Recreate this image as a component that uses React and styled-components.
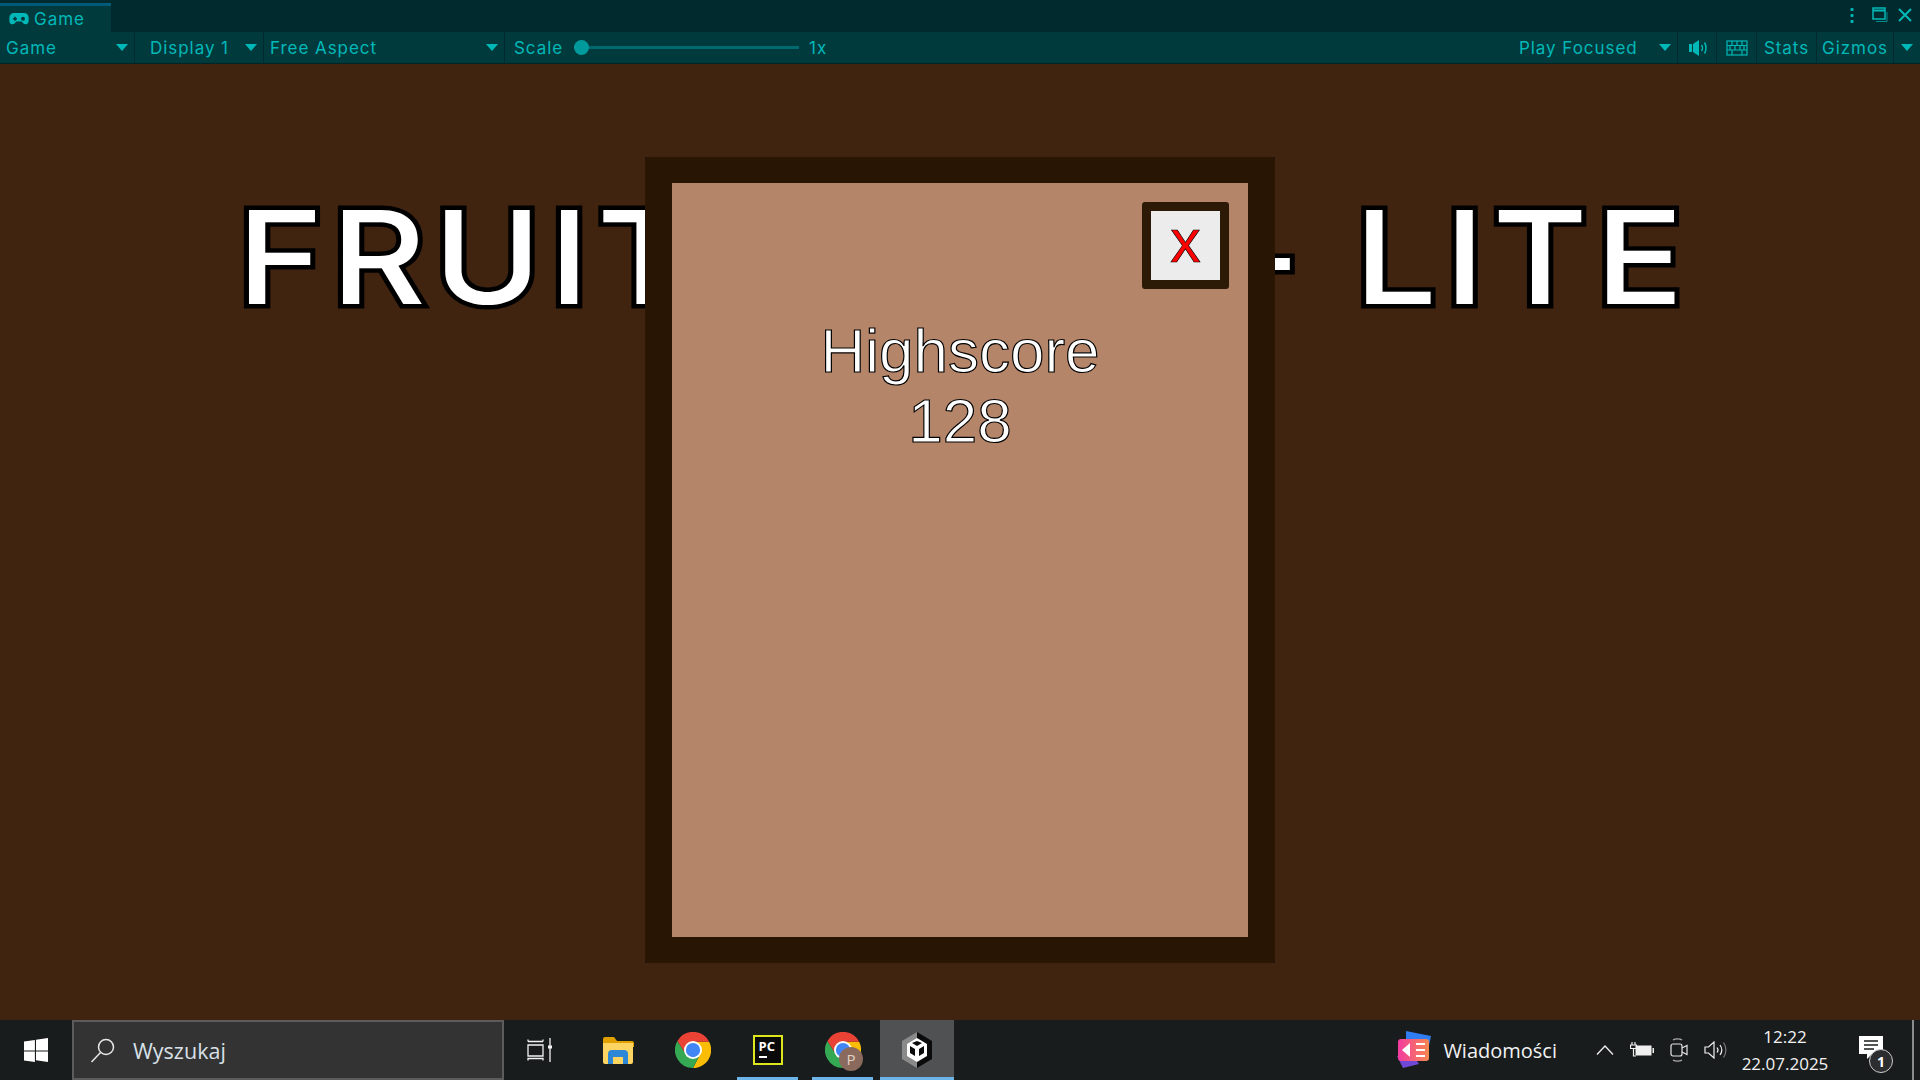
import React from "react";
import styled, { createGlobalStyle } from "styled-components";

const Global = createGlobalStyle`
  html, body { margin: 0; padding: 0; background: #402410; }
  * { box-sizing: border-box; }
`;

const Arrow = () => <ArrowShape />;

const GamepadIcon = () => (
  <svg width="20" height="14" viewBox="0 0 20 14">
    <path d="M5 1h10a4.6 4.6 0 0 1 4.6 4.6v3.6c0 3-3.6 4.2-5.4 2l-1.4-1.6H7.2l-1.4 1.6c-1.8 2.2-5.4 1-5.4-2V5.600A4.6 4.6 0 0 1 5 1z" fill="#00b8b8" />
    <path d="M4 6h4v1.600H4zM5.200 4.800h1.600v4H5.200z" fill="#00363a" />
    <circle cx="14" cy="6.800" r="2" fill="#00363a" />
  </svg>
);

const SpeakerIcon = () => (
  <svg width="20" height="16" viewBox="0 0 20 16" fill="#00b8b8">
    <rect x="0" y="4" width="3" height="8" />
    <path d="M4 4l6-4v16l-6-4z" />
    <path d="M12.500 5c1.300 1.600 1.300 4.400 0 6" fill="none" stroke="#00b8b8" strokeWidth="1.500" />
    <path d="M15.500 2.500c2 3 2 8 0 11" fill="none" stroke="#00b8b8" strokeWidth="1.500" />
  </svg>
);

const KeyboardIcon = () => (
  <svg width="22" height="16" viewBox="0 0 22 16" fill="none" stroke="#00b8b8" strokeWidth="1.200">
    <rect x="1" y="1" width="20" height="14" />
    <path d="M1 5.500h20M1 10h20M6 1v4.500M11 1v4.500M16 1v4.500M4 5.500V10M9 5.500V10M14 5.500V10M18 5.500V10M6 10v5M16 10v5" />
  </svg>
);

const MenuDots = () => (
  <svg width="4" height="15" viewBox="0 0 4 15" fill="#00b8b8">
    <rect x="0.500" y="0" width="3" height="3" rx="1" />
    <rect x="0.500" y="6" width="3" height="3" rx="1" />
    <rect x="0.500" y="12" width="3" height="3" rx="1" />
  </svg>
);

const MaximizeIcon = () => (
  <svg width="16" height="16" viewBox="0 0 16 16" fill="none" stroke="#00b8b8">
    <rect x="1" y="1" width="12" height="11" strokeWidth="1.500" />
    <path d="M1 3.500h12" strokeWidth="2" />
    <path d="M4 14.500h11V5" strokeWidth="1" opacity="0.700" />
  </svg>
);

const CloseIcon = () => (
  <svg width="14" height="14" viewBox="0 0 14 14" stroke="#00b8b8" strokeWidth="2">
    <path d="M1 1l12 12M13 1L1 13" />
  </svg>
);

const WindowsLogo = () => (
  <svg width="24" height="24" viewBox="0 0 24 24" fill="#fff">
    <path d="M0 3.400l10.900-1.500v10.500H0zM12 1.700L24 0v12.400H12zM0 13.500h10.900v10.500L0 22.500zM12 13.500h12V24l-12-1.700z" />
  </svg>
);

const SearchIcon = () => (
  <svg width="26" height="26" viewBox="0 0 26 26" fill="none" stroke="#e8e8e8" strokeWidth="1.500">
    <circle cx="16" cy="10" r="7.500" />
    <path d="M10.500 15.500L1.500 25" />
  </svg>
);

const TaskViewIcon = () => (
  <svg width="26" height="24" viewBox="0 0 26 24" fill="none" stroke="#f2f2f2" strokeWidth="1.300">
    <path d="M1 3.500V1.500M1 3.500h15M16 3.500V1.500M1 7h15v11H1zM1 22.500v-2h15v2" />
    <path d="M23 0v24" />
    <rect x="21" y="7.500" width="4" height="3" fill="#f2f2f2" stroke="none" />
  </svg>
);

const FolderIcon = () => (
  <svg width="32" height="27" viewBox="0 0 32 27">
    <path d="M1 2a2 2 0 0 1 2-2h9l3 4h15a2 2 0 0 1 2 2v4H1z" fill="#e0a100" />
    <path d="M1 6h30v19a2 2 0 0 1-2 2H3a2 2 0 0 1-2-2z" fill="#fbd461" />
    <path d="M6 27V17a4 4 0 0 1 4-4h12a4 4 0 0 1 4 4v10h-5v-7H11v7z" fill="#2c87d6" />
  </svg>
);

const ChromeIcon = () => (
  <svg width="36" height="36" viewBox="0 0 48 48">
    <path d="M24 13H45.500A24 24 0 0 1 24 48L33.500 29.500Z" fill="#fbbc04" />
    <path d="M14.500 29.500L3.200 12A24 24 0 0 0 24 48L33.500 29.500Z" fill="#34a853" />
    <path d="M24 13H45.500A24 24 0 0 0 3.200 12L14.500 29.500Z" fill="#ea4335" />
    <circle cx="24" cy="24" r="12" fill="#fff" />
    <circle cx="24" cy="24" r="9.500" fill="#4285f4" />
  </svg>
);

const UnityIcon = () => (
  <svg width="32" height="36" viewBox="0 0 32 36">
    <path d="M16 0L31 9v18L16 36z" fill="#0b0b0b" />
    <path d="M16 0L1 9v18l15 9z" fill="#8a8a8a" />
    <path d="M16 6l10 6v12l-10 6-10-6V12z" fill="#fff" />
    <path d="M16 14l-5-3 5-2 5 2zM9 14l5 3v7l-5-3zM23 14l-5 3v7l5-3z" fill="#0b0b0b" />
  </svg>
);

const NewsIcon = () => (
  <svg width="36" height="38" viewBox="0 0 36 38">
    <path d="M11 0l25 5-5 24-20-5z" fill="#2f7df0" />
    <path d="M2 25l6 12 16-4-8-12z" fill="#7048d8" />
    <rect x="3" y="8" width="31" height="22" rx="3" fill="url(#newsFill)" />
    <defs>
      <linearGradient id="newsFill" x1="0" x2="1">
        <stop offset="0" stopColor="#f23ba0" />
        <stop offset="1" stopColor="#f8884e" />
      </linearGradient>
    </defs>
    <path d="M7 19l8-7v14z" fill="#fff" />
    <path d="M21 13h9M21 19h9M21 25h9" stroke="#fff" strokeWidth="2" />
  </svg>
);

const ChevronIcon = () => (
  <svg width="18" height="10" viewBox="0 0 18 10" fill="none" stroke="#f0f0f0" strokeWidth="1.300">
    <path d="M1 9.500L9 1l8 8.500" />
  </svg>
);

const BatteryIcon = () => (
  <svg width="24" height="16" viewBox="0 0 24 16">
    <path d="M5 0v3M2 0v3M0.500 3h6v3.500h-6zM3.500 6.500V14H6" fill="none" stroke="#f0f0f0" strokeWidth="1.200" />
    <rect x="6" y="4" width="15" height="9" fill="#f0f0f0" stroke="#f0f0f0" strokeWidth="1" />
    <rect x="22.500" y="6" width="1.500" height="5" fill="#f0f0f0" />
  </svg>
);

const CameraIcon = () => (
  <svg width="18" height="24" viewBox="0 0 18 24" fill="none" stroke="#e6e6e6" strokeWidth="1.200">
    <rect x="1" y="6" width="11" height="12" rx="2" />
    <path d="M12 10l5-2.500v9L12 14" />
    <path d="M3 2c2-1.500 7-1.500 9 0M3 22c2 1.500 7 1.500 9 0" opacity="0.700" />
  </svg>
);

const VolumeIcon = () => (
  <svg width="24" height="18" viewBox="0 0 24 18" fill="none" stroke="#f0f0f0" strokeWidth="1.200">
    <path d="M1 6h3.500L10 1v16l-5.500-5H1z" />
    <path d="M13 6.500c1.200 1.500 1.200 3.500 0 5M16 4c2.200 3 2.200 7 0 10" />
    <path d="M19.500 1.500c3.200 4.500 3.200 10.500 0 15" opacity="0.450" />
  </svg>
);

const NotificationIcon = () => (
  <svg width="24" height="24" viewBox="0 0 24 24">
    <path d="M0 0h24v18H13l-5 5v-5H0z" fill="#fff" />
    <path d="M5 5h14M5 9h14M5 13h10" stroke="#1a1c1d" strokeWidth="1.300" />
  </svg>
);

export default function App() {
  return (
    <Screen>
      <Global />
      <TabBar>
        <Tab>
          <GamepadIcon />
          <span>Game</span>
        </Tab>
        <WindowControls>
          <MenuDots />
          <MaximizeIcon />
          <CloseIcon />
        </WindowControls>
      </TabBar>
      <Toolbar>
        <ToolItem $width={135}>
          Game
          <Arrow />
        </ToolItem>
        <ToolItem $width={129} $inset={15}>
          Display 1
          <Arrow />
        </ToolItem>
        <ToolItem $width={241}>
          Free Aspect
          <Arrow />
        </ToolItem>
        <ScaleItem>
          Scale
          <SliderTrack>
            <SliderThumb />
          </SliderTrack>
          <span>1x</span>
        </ScaleItem>
        <Spacer />
        <ToolItem $width={165}>
          Play Focused
          <Arrow />
        </ToolItem>
        <IconItem $width={39} $shift={4}>
          <SpeakerIcon />
        </IconItem>
        <IconItem $width={40}>
          <KeyboardIcon />
        </IconItem>
        <IconItem $width={60}>Stats</IconItem>
        <IconItem $width={77}>Gizmos</IconItem>
        <IconItem $width={26}>
          <Arrow />
        </IconItem>
      </Toolbar>
      <GameView>
        <Title>
          FRUIT <HiddenWord>MERGE</HiddenWord> - LITE
        </Title>
        <Modal>
          <CloseButton>x</CloseButton>
          <Score>
            Highscore
            <br />
            128
          </Score>
        </Modal>
      </GameView>
      <Taskbar>
        <StartButton>
          <WindowsLogo />
        </StartButton>
        <SearchBox>
          <SearchIcon />
          <span>Wyszukaj</span>
        </SearchBox>
        <TaskButton $width={76} $pad={4}>
          <TaskViewIcon />
        </TaskButton>
        <TaskButton $width={75}>
          <FolderIcon />
        </TaskButton>
        <TaskButton $width={75}>
          <ChromeIcon />
        </TaskButton>
        <TaskButton $width={75} $open>
          <PyCharmLogo>
            <PyCharmInner>
              PC
              <PyCharmLine />
            </PyCharmInner>
          </PyCharmLogo>
        </TaskButton>
        <TaskButton $width={75} $open>
          <ChromeIcon />
          <ProfileBadge>P</ProfileBadge>
        </TaskButton>
        <TaskButton $width={74} $open $active>
          <UnityIcon />
        </TaskButton>
        <Spacer />
        <NewsWidget>
          <NewsIcon />
          <span>Wiadomości</span>
        </NewsWidget>
        <Tray>
          <ChevronIcon />
          <BatteryIcon />
          <CameraIcon />
          <VolumeIcon />
        </Tray>
        <Clock>
          <span>12:22</span>
          <span>22.07.2025</span>
        </Clock>
        <NotificationButton>
          <NotificationIcon />
          <NotificationBadge>1</NotificationBadge>
        </NotificationButton>
        <ShowDesktop />
      </Taskbar>
    </Screen>
  );
}

const Screen = styled.div`
  width: 1920px;
  height: 1080px;
  display: flex;
  flex-direction: column;
  overflow: hidden;
  font-family: "Inter", "Liberation Sans", sans-serif;
`;

const TabBar = styled.div`
  height: 32px;
  flex: none;
  display: flex;
  justify-content: space-between;
  background: #002a2d;
`;

const Tab = styled.div`
  width: 111px;
  margin-top: 3px;
  padding-left: 9px;
  display: flex;
  align-items: center;
  gap: 5px;
  border-top: 3px solid #005a7a;
  background: #003a3d;
  color: #00b8b8;
  font-size: 17px;
  letter-spacing: 1px;
`;

const WindowControls = styled.div`
  display: flex;
  align-items: center;
  gap: 10px;
  padding: 0 8px 2px 0;
  & > svg:first-child {
    margin-right: 8px;
  }
`;

const Toolbar = styled.div`
  height: 32px;
  flex: none;
  display: flex;
  background: #003a3d;
  border-bottom: 1px solid #002326;
  color: #00b8b8;
  font-size: 17px;
  letter-spacing: 0.95px;
`;

const ToolItem = styled.div`
  position: relative;
  width: ${(p) => p.$width}px;
  display: flex;
  align-items: center;
  justify-content: space-between;
  padding: 0 6px 0 ${(p) => p.$inset || 6}px;
  border-right: 1px solid #002a2d;
`;

const ArrowShape = styled.i`
  display: block;
  width: 0;
  height: 0;
  border-left: 6px solid transparent;
  border-right: 6px solid transparent;
  border-top: 7px solid #00b8b8;
`;

const ScaleItem = styled.div`
  display: flex;
  align-items: center;
  padding-left: 9px;
`;

const SliderTrack = styled.div`
  width: 225px;
  height: 3px;
  margin: 0 10px 0 11px;
  display: flex;
  align-items: center;
  background: #006a6e;
`;

const SliderThumb = styled.div`
  width: 15px;
  height: 15px;
  border-radius: 50%;
  background: #009a9c;
`;

const Spacer = styled.div`
  flex: 1;
`;

const IconItem = styled.div`
  width: ${(p) => p.$width}px;
  padding-left: ${(p) => p.$shift || 0}px;
  display: flex;
  align-items: center;
  justify-content: center;
  border-right: 1px solid #002a2d;
  &:last-child {
    border-right: 0;
  }
`;

const GameView = styled.div`
  position: relative;
  flex: 1;
  display: flex;
  justify-content: center;
  background: #402410;
`;

const Title = styled.h1`
  margin: 116px 0 0 8px;
  height: 160px;
  font-size: 129px;
  line-height: 1.2;
  font-weight: 500;
  letter-spacing: 7px;
  white-space: nowrap;
  color: #fff;
  -webkit-text-stroke: 9px #000;
  paint-order: stroke fill;
  transform: scaleX(1.13);
`;

const HiddenWord = styled.span`
  letter-spacing: -13px;
`;

const Modal = styled.div`
  position: absolute;
  top: 93px;
  left: 645px;
  width: 630px;
  height: 806px;
  display: flex;
  flex-direction: column;
  border-style: solid;
  border-color: #291503;
  border-width: 26px 27px;
  background: #b58569;
`;

const CloseButton = styled.div`
  align-self: flex-end;
  width: 87px;
  height: 87px;
  margin: 19px 19px 0 0;
  padding-bottom: 8px;
  display: flex;
  align-items: center;
  justify-content: center;
  border: 9px solid #2d1a06;
  border-radius: 3px;
  background: #ececec;
  color: #f00;
  font: 400 61px/1 "Liberation Sans", sans-serif;
  -webkit-text-stroke: 0.600px #000;
`;

const Score = styled.div`
  margin-top: 27px;
  text-align: center;
  color: #fff;
  font: 400 62px/70px "Liberation Sans", sans-serif;
  -webkit-text-stroke: 1.200px #000;
`;

const Taskbar = styled.div`
  height: 60px;
  flex: none;
  display: flex;
  align-items: stretch;
  background: #191c1d;
  color: #f2f2f2;
  font-family: "Open Sans", "Noto Sans", sans-serif;
`;

const StartButton = styled.div`
  width: 72px;
  display: flex;
  align-items: center;
  justify-content: center;
`;

const SearchBox = styled.div`
  width: 432px;
  display: flex;
  align-items: center;
  gap: 17px;
  padding-left: 16px;
  border: 2px solid #5c5c5c;
  background: #333;
  color: #d8e0e8;
  font-size: 21.500px;
`;

const TaskButton = styled.div`
  position: relative;
  width: ${(p) => p.$width}px;
  padding-right: ${(p) => p.$pad || 0}px;
  display: flex;
  align-items: center;
  justify-content: center;
  background: ${(p) => (p.$active ? "#4f5152" : "transparent")};
  &::after {
    content: "";
    display: ${(p) => (p.$open ? "block" : "none")};
    position: absolute;
    left: ${(p) => (p.$active ? 0 : 7)}px;
    right: ${(p) => (p.$active ? 0 : 7)}px;
    bottom: 0;
    height: 3px;
    background: #6db4e8;
  }
`;

const PyCharmLogo = styled.div`
  width: 30px;
  height: 30px;
  padding: 2px;
  background: #dde51c;
`;

const PyCharmInner = styled.div`
  width: 26px;
  height: 26px;
  padding: 3px 0 0 4px;
  background: #0a0a0a;
  color: #fff;
  font: 700 13px/13px "Open Sans", sans-serif;
`;

const PyCharmLine = styled.div`
  width: 8px;
  height: 2px;
  margin-top: 3px;
  background: #fff;
`;

const ProfileBadge = styled.div`
  position: absolute;
  left: 34px;
  top: 27px;
  width: 24px;
  height: 24px;
  border-radius: 50%;
  display: flex;
  align-items: center;
  justify-content: center;
  background: #8a6a5c;
  color: #e0d0c8;
  font-size: 15px;
`;

const NewsWidget = styled.div`
  display: flex;
  align-items: center;
  gap: 12px;
  margin-right: 39px;
  font-size: 20px;
`;

const Tray = styled.div`
  display: flex;
  align-items: center;
  gap: 16px;
  margin-right: 9px;
`;

const Clock = styled.div`
  width: 96px;
  display: flex;
  flex-direction: column;
  align-items: center;
  justify-content: center;
  gap: 7px;
  font-size: 17px;
  line-height: 20px;
`;

const NotificationButton = styled.div`
  position: relative;
  width: 79px;
  padding: 0 3px 5px 0;
  display: flex;
  align-items: center;
  justify-content: center;
`;

const NotificationBadge = styled.div`
  position: absolute;
  left: 36px;
  top: 29px;
  width: 24px;
  height: 24px;
  border: 1px solid #ccc;
  border-radius: 50%;
  display: flex;
  align-items: center;
  justify-content: center;
  background: #2b2d2e;
  color: #fff;
  font-size: 14px;
  font-weight: 700;
`;

const ShowDesktop = styled.div`
  width: 8px;
  border-left: 2px solid #8a8c8d;
`;
